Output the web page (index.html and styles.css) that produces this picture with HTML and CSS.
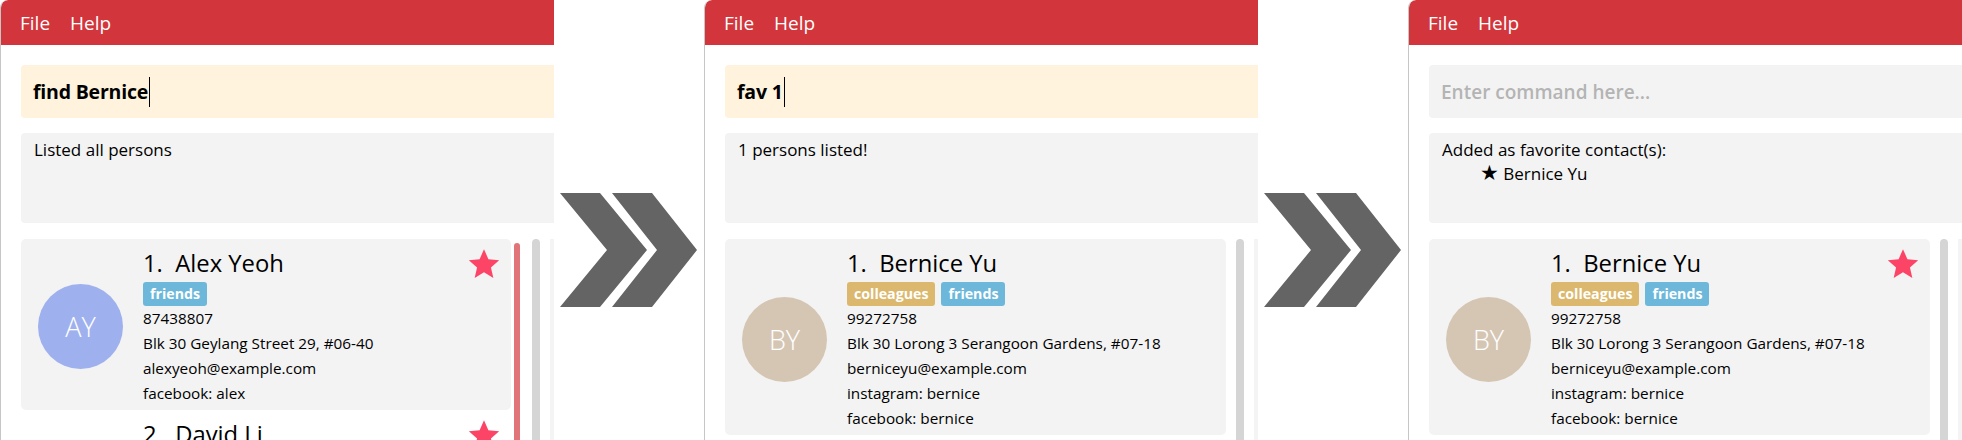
FILE: index.html
```html
<!DOCTYPE html>
<html>
<head>
<meta charset="utf-8">
<link rel="stylesheet" href="styles.css">
</head>
<body>
<div class="strip">

  <section class="window">
    <nav class="menubar"><span class="menu">File</span><span class="menu">Help</span></nav>
    <div class="command focused"><span class="cmd-text">find Bernice</span><span class="caret"></span></div>
    <div class="result">Listed all persons</div>
    <div class="lists">
      <div class="listview">
        <div class="cells">
          <div class="card">
            <div class="avatar av-blue">AY</div>
            <div class="info">
              <div class="name">1.&nbsp; Alex Yeoh</div>
              <div class="tags"><span class="tag tag-friends">friends</span></div>
              <div class="line">87438807</div>
              <div class="line">Blk 30 Geylang Street 29, #06-40</div>
              <div class="line">alexyeoh@example.com</div>
              <div class="line">facebook: alex</div>
            </div>
            <svg class="fav" viewBox="0 0 24 24"><path d="M12 1.5l3.1 7.1 7.6.7-5.8 5.1 1.7 7.5L12 17.9l-6.6 4 1.7-7.5-5.8-5.1 7.6-.7z"/></svg>
          </div>
          <div class="card plain">
            <div class="avatar av-green">DL</div>
            <div class="info">
              <div class="name">2.&nbsp; David Li</div>
            </div>
            <svg class="fav" viewBox="0 0 24 24"><path d="M12 1.5l3.1 7.1 7.6.7-5.8 5.1 1.7 7.5L12 17.9l-6.6 4 1.7-7.5-5.8-5.1 7.6-.7z"/></svg>
          </div>
        </div>
        <div class="vbar"></div>
      </div>
      <div class="gbar"></div>
      <div class="pane"></div>
    </div>
  </section>

  <div class="arrow">
    <svg width="137" height="114" viewBox="0 0 137 114"><polygon points="0,0 40,0 87,57 40,114 0,114 47,57"/><polygon points="52,0 92,0 137,57 92,114 52,114 97,57"/></svg>
  </div>

  <section class="window">
    <nav class="menubar"><span class="menu">File</span><span class="menu">Help</span></nav>
    <div class="command focused"><span class="cmd-text">fav 1</span><span class="caret"></span></div>
    <div class="result">1 persons listed!</div>
    <div class="lists">
      <div class="listview">
        <div class="cells">
          <div class="card">
            <div class="avatar av-beige">BY</div>
            <div class="info">
              <div class="name">1.&nbsp; Bernice Yu</div>
              <div class="tags"><span class="tag tag-colleagues">colleagues</span><span class="tag tag-friends">friends</span></div>
              <div class="line">99272758</div>
              <div class="line">Blk 30 Lorong 3 Serangoon Gardens, #07-18</div>
              <div class="line">berniceyu@example.com</div>
              <div class="line">instagram: bernice</div>
              <div class="line">facebook: bernice</div>
            </div>
          </div>
        </div>
      </div>
      <div class="gbar"></div>
      <div class="pane"></div>
    </div>
  </section>

  <div class="arrow">
    <svg width="137" height="114" viewBox="0 0 137 114"><polygon points="0,0 40,0 87,57 40,114 0,114 47,57"/><polygon points="52,0 92,0 137,57 92,114 52,114 97,57"/></svg>
  </div>

  <section class="window">
    <nav class="menubar"><span class="menu">File</span><span class="menu">Help</span></nav>
    <div class="command"><span class="placeholder">Enter command here...</span></div>
    <div class="result">Added as favorite contact(s):<br><span class="indent"><span class="bstar">★</span> Bernice Yu</span></div>
    <div class="lists">
      <div class="listview">
        <div class="cells">
          <div class="card">
            <div class="avatar av-beige">BY</div>
            <div class="info">
              <div class="name">1.&nbsp; Bernice Yu</div>
              <div class="tags"><span class="tag tag-colleagues">colleagues</span><span class="tag tag-friends">friends</span></div>
              <div class="line">99272758</div>
              <div class="line">Blk 30 Lorong 3 Serangoon Gardens, #07-18</div>
              <div class="line">berniceyu@example.com</div>
              <div class="line">instagram: bernice</div>
              <div class="line">facebook: bernice</div>
            </div>
            <svg class="fav" viewBox="0 0 24 24"><path d="M12 1.5l3.1 7.1 7.6.7-5.8 5.1 1.7 7.5L12 17.9l-6.6 4 1.7-7.5-5.8-5.1 7.6-.7z"/></svg>
          </div>
        </div>
      </div>
      <div class="gbar"></div>
      <div class="pane"></div>
    </div>
  </section>

</div>
</body>
</html>
```

FILE: styles.css
```css
html, body {
  margin: 0;
  padding: 0;
  background: #ffffff;
}
body {
  width: 1962px;
  height: 440px;
  overflow: hidden;
  font-family: "Open Sans", "Noto Sans", sans-serif;
  color: #000;
}
.strip {
  display: flex;
  height: 440px;
}
.window {
  width: 553px;
  flex: none;
  height: 440px;
  overflow: hidden;
  border-left: 1px solid #c6c6c6;
  border-top-left-radius: 8px;
  display: flex;
  flex-direction: column;
}
.menubar {
  height: 45px;
  flex: none;
  background: #d2353b;
  display: flex;
  align-items: center;
  padding-left: 19px;
  gap: 20px;
  border-top-left-radius: 7px;
}
.menu {
  color: #fff;
  font-size: 19px;
  line-height: 22px;
}
.command {
  margin: 20px 0 0 20px;
  width: 560px;
  height: 53px;
  flex: none;
  border-radius: 4px;
  background: #f3f3f3;
  display: flex;
  align-items: center;
  padding-left: 12px;
  box-sizing: border-box;
}
.command.focused {
  background: #fff3de;
}
.cmd-text {
  font-weight: 700;
  font-size: 19.5px;
  letter-spacing: -0.2px;
}
.caret {
  width: 1px;
  height: 30px;
  background: #000;
  margin-left: 1px;
}
.placeholder {
  font-weight: 600;
  font-size: 19px;
  color: #b4b4b4;
}
.result {
  margin: 15px 0 0 20px;
  width: 560px;
  height: 90px;
  flex: none;
  box-sizing: border-box;
  border-radius: 4px;
  background: #f3f3f3;
  padding: 5px 0 0 13px;
  font-size: 17px;
  line-height: 24px;
}
.indent {
  padding-left: 38px;
}
.bstar {
  font-family: "DejaVu Sans", sans-serif;
  font-size: 21px;
  line-height: 20px;
}
.lists {
  margin: 16px 0 0 20px;
  display: flex;
  flex: 1;
  min-height: 0;
}
.listview {
  width: 501px;
  flex: none;
  display: flex;
}
.cells {
  flex: 1;
  display: flex;
  flex-direction: column;
}
.vbar {
  width: 6px;
  margin: 4px 2px 0 3px;
  background: #e07478;
  border-radius: 3px 3px 0 0;
}
.gbar {
  width: 8px;
  flex: none;
  margin-left: 10px;
  background: #d5d5d5;
  border-radius: 4px 4px 0 0;
}
.pane {
  margin-left: 10px;
  width: 20px;
  flex: none;
  background: #f4f4f4;
}
.card {
  position: relative;
  display: flex;
  align-items: center;
  background: #f3f3f3;
  border-radius: 5px;
  padding: 8px 0 4px 17px;
  flex: none;
}
.card.plain {
  background: #fff;
  align-items: flex-start;
}
.avatar {
  width: 85px;
  height: 85px;
  border-radius: 50%;
  flex: none;
  display: flex;
  align-items: center;
  justify-content: center;
  color: #fff;
  font-size: 27px;
  font-weight: 300;
  margin-right: 20px;
}
.av-blue { background: #9eb1ee; }
.av-beige { background: #d5c6b4; }
.av-green { background: #fff; color: #fff; }
.info {
  display: flex;
  flex-direction: column;
}
.name {
  font-size: 23.8px;
  line-height: 32px;
  height: 32px;
}
.tags {
  display: flex;
  gap: 6px;
  margin-top: 3px;
  height: 24px;
}
.tag {
  height: 24px;
  line-height: 24px;
  padding: 0 7px;
  border-radius: 3px;
  color: #fff;
  font-weight: 700;
  font-size: 14.2px;
}
.tag-friends { background: #6db8da; }
.tag-colleagues { background: #dbb86d; }
.line {
  font-size: 15.3px;
  line-height: 25px;
  height: 25px;
}
.fav {
  position: absolute;
  top: 8px;
  right: 10px;
  width: 34px;
  height: 34px;
  fill: #fc4566;
}
.arrow {
  width: 150px;
  flex: none;
  padding: 193px 0 0 6px;
  box-sizing: border-box;
}
.arrow svg {
  display: block;
  fill: #646464;
}
```
